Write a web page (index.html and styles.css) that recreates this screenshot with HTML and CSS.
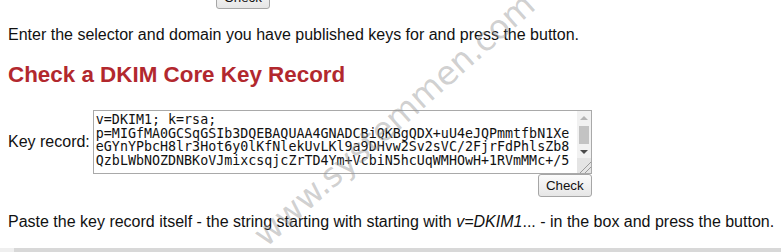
FILE: index.html
```html
<!DOCTYPE html>
<html lang="en">
<head>
<meta charset="utf-8">
<title>Check a DKIM Core Key Record</title>
<link rel="stylesheet" href="styles.css">
</head>
<body>
<div class="page">
  <div class="prev-form"><button class="btn" type="button">Check</button></div>
  <p class="intro">Enter the selector and domain you have published keys for and press the button.</p>
  <h2 class="title">Check a DKIM Core Key Record</h2>
  <form class="key-form">
    <div class="key-row">
      <label class="key-label" for="key">Key record:</label>
      <div class="key-box">
        <textarea id="key" class="key-text" spellcheck="false">v=DKIM1; k=rsa;
p=MIGfMA0GCSqGSIb3DQEBAQUAA4GNADCBiQKBgQDX+uU4eJQPmmtfbN1Xe
eGYnYPbcH8lr3Hot6y0lKfNlekUvLKl9a9DHvw2Sv2sVC/2FjrFdPhlsZb8
QzbLWbNOZDNBKoVJmixcsqjcZrTD4Ym+VcbiN5hcUqWMHOwH+1RVmMMc+/5</textarea>
        <div class="scrollbar">
          <span class="sb-btn sb-up"></span>
          <span class="sb-track"><span class="sb-thumb"></span></span>
          <span class="sb-btn sb-down"></span>
          <span class="sb-grip"></span>
        </div>
      </div>
    </div>
    <div class="submit-row"><button class="btn" type="button">Check</button></div>
  </form>
  <p class="note">Paste the key record itself - the string starting with starting with <i>v=DKIM1</i>... - in the box and press the button.</p>
</div>
<div class="footer-bar"></div>
<div class="watermark">www.systemmen.com</div>
</body>
</html>
```
FILE: styles.css
```css
html, body {
  margin: 0;
  padding: 0;
  background: #fff;
}
body {
  width: 781px;
  height: 252px;
  overflow: hidden;
  position: relative;
  font-family: "Liberation Sans", Arial, sans-serif;
  font-size: 16px;
  color: #111;
}
.page {
  padding: 0 0 0 8px;
}
.prev-form {
  margin-top: -14px;
  padding-left: 208px;
  height: 23px;
}
.btn {
  font-family: "Liberation Sans", Arial, sans-serif;
  font-size: 13.33px;
  line-height: 15px;
  height: 23px;
  width: 54px;
  padding: 0;
  color: #111;
  background: linear-gradient(#fbfbfb, #e6e6e6);
  border: 1px solid #a6a6a6;
  border-radius: 3px;
  box-sizing: border-box;
}
.intro {
  margin: 17px 0 0;
  line-height: 18px;
  white-space: nowrap;
}
.title {
  margin: 18px 0 0;
  font-size: 22.4px;
  line-height: 26px;
  font-weight: bold;
  color: #b2282e;
}
.key-form {
  display: inline-block;
  margin-top: 22px;
}
.key-row {
  display: flex;
  align-items: center;
  gap: 3px;
}
.key-label {
  line-height: 18px;
}
.key-box {
  display: flex;
  width: 499px;
  height: 64px;
  border: 1px solid #a9a9a9;
  box-sizing: border-box;
}
.key-text {
  flex: 1;
  margin: 0;
  border: 0;
  outline: none;
  resize: none;
  overflow: hidden;
  white-space: pre;
  padding: 2px 2px 0 2px;
  font-family: "DejaVu Sans Mono", monospace;
  font-size: 13.33px;
  line-height: 13.7px;
  color: #111;
  background: #fff;
}
.scrollbar {
  width: 14px;
  display: flex;
  flex-direction: column;
  background: #f1f1f1;
}
.sb-btn {
  height: 13px;
  display: flex;
  align-items: center;
  justify-content: center;
}
.sb-up::before {
  content: "";
  border-left: 4px solid transparent;
  border-right: 4px solid transparent;
  border-bottom: 4px solid #b4b4b4;
}
.sb-down::before {
  content: "";
  border-left: 4px solid transparent;
  border-right: 4px solid transparent;
  border-top: 4px solid #4a4a4a;
}
.sb-track {
  flex: 1;
  display: flex;
  flex-direction: column;
  padding: 2px 2px 0;
}
.sb-thumb {
  height: 18px;
  background: #c3c3c3;
}
.sb-grip {
  height: 15px;
  background:
    linear-gradient(135deg, transparent 0 60%, #9a9a9a 60% 64%, transparent 64% 76%, #9a9a9a 76% 80%, transparent 80%),
    #e4e4e4;
}
.submit-row {
  display: flex;
  justify-content: flex-end;
}
.note {
  margin: 16px 0 0;
  line-height: 18px;
  white-space: nowrap;
}
.footer-bar {
  position: absolute;
  left: 0;
  right: 0;
  bottom: 0;
  height: 4px;
  background: linear-gradient(to right, #efefef 0 14px, #d8d8d8 14px);
}
.watermark {
  position: absolute;
  left: 266px;
  top: 220px;
  font-family: "DejaVu Sans", sans-serif;
  font-size: 33px;
  line-height: 33px;
  white-space: nowrap;
  color: rgba(150, 150, 150, 0.45);
  transform-origin: 0 28px;
  transform: rotate(-41.5deg);
  pointer-events: none;
}
```
